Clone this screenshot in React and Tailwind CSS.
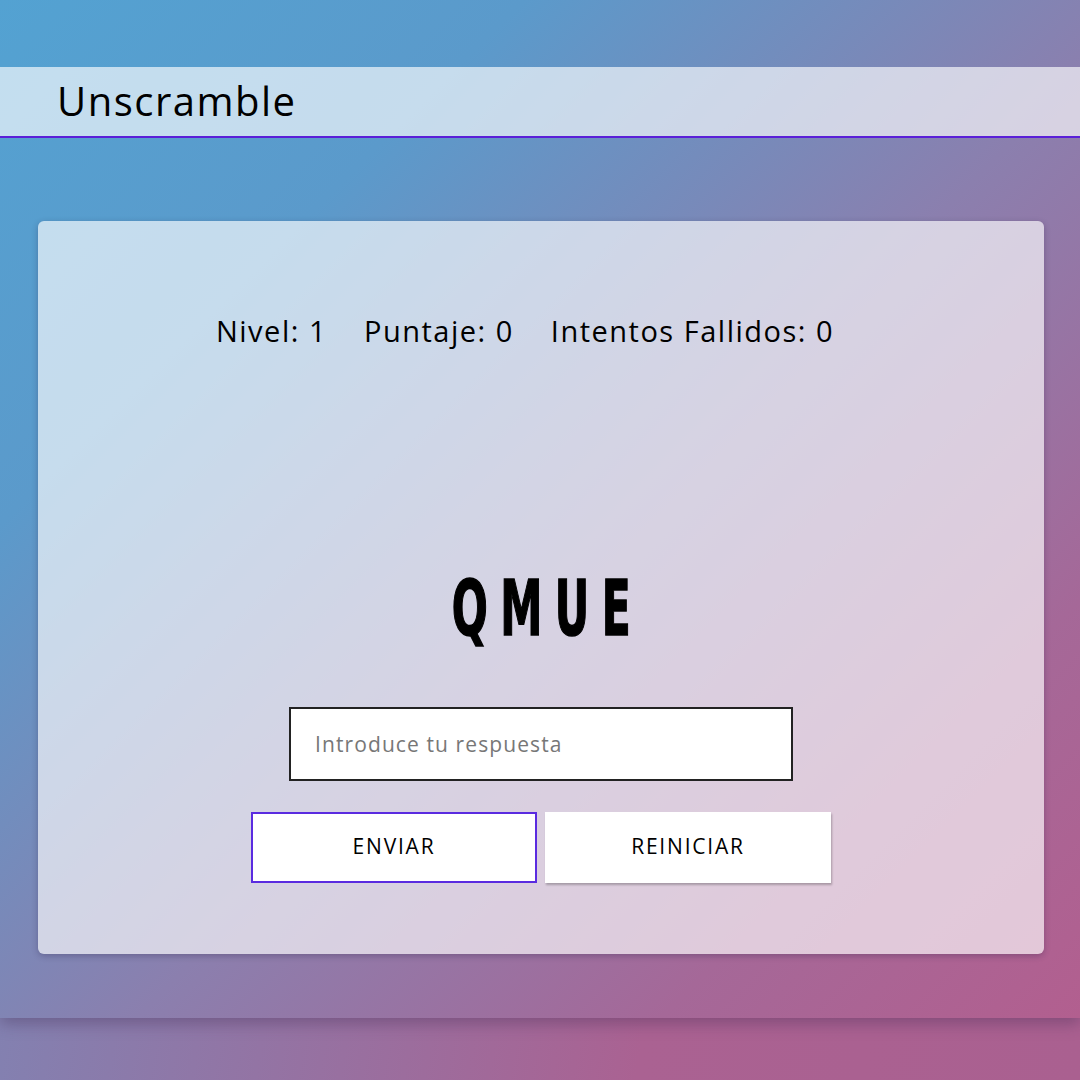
import React, { useState } from "react";

const rounded = { fontFamily: "'Open Sans', Lato, sans-serif" };

function Stats({ level, score, fails }) {
  return (
    <div
      className="flex justify-center gap-[37px] pr-[32px] text-[29px] tracking-[1.5px] text-black"
      style={rounded}
    >
      <span>Nivel: {level}</span>
      <span>Puntaje: {score}</span>
      <span>Intentos Fallidos: {fails}</span>
    </div>
  );
}

export default function App() {
  const [answer, setAnswer] = useState("");
  const word = "QMUE";

  return (
    <div className="min-h-[1080px] w-full bg-[linear-gradient(100deg,#7889b9_0%,#aa6292_65%,#aa6090_100%)]">
      <main className="h-[1018px] pt-[67px] shadow-[0_6px_14px_rgba(60,40,80,0.35)] bg-[linear-gradient(135deg,#53a2d2_0%,#5b9acb_25%,#8b7fae_55%,#a56898_80%,#b25f8f_100%)]">
        {/* Header */}
        <header className="h-[71px] flex items-center pl-[57px] bg-white/65 border-b-2 border-[#5a1fd8]">
          <h1
            className="text-[40px] tracking-[1.5px] text-black leading-none pb-[2px]"
            style={rounded}
          >
            Unscramble
          </h1>
        </header>

        {/* Game card */}
        <section className="mt-[83px] ml-[38px] mr-[36px] h-[733px] rounded-md bg-white/65 shadow-[0_2px_6px_rgba(40,30,70,0.3)] flex flex-col items-center pt-[88px]">
          <Stats level={1} score={0} fails={0} />

          <div
            className="mt-[218px] flex gap-[20px] text-[76px] font-bold leading-none text-black"
            style={{
              fontFamily: "'Liberation Sans Narrow', 'DejaVu Sans Condensed', sans-serif",
              transform: "scaleX(0.62)",
              WebkitTextStroke: "1.5px black",
            }}
          >
            {word.split("").map((ch, i) => (
              <span key={i}>{ch}</span>
            ))}
          </div>

          <input
            value={answer}
            onChange={(e) => setAnswer(e.target.value)}
            placeholder="Introduce tu respuesta"
            className="mt-[60px] w-[504px] h-[74px] bg-white border-2 border-[#222] px-[24px] text-[21px] tracking-[1.1px] text-black placeholder:text-[#777] outline-none"
            style={rounded}
          />

          <div
            className="mt-[31px] flex gap-[8px] text-[21px] tracking-[1.8px] text-black"
            style={rounded}
          >
            <button className="w-[286px] h-[71px] bg-white border-2 border-[#5a2be0]">
              ENVIAR
            </button>
            <button className="w-[286px] h-[71px] bg-white shadow-[1px_2px_2px_rgba(0,0,0,0.25)]">
              REINICIAR
            </button>
          </div>
        </section>
      </main>
    </div>
  );
}
